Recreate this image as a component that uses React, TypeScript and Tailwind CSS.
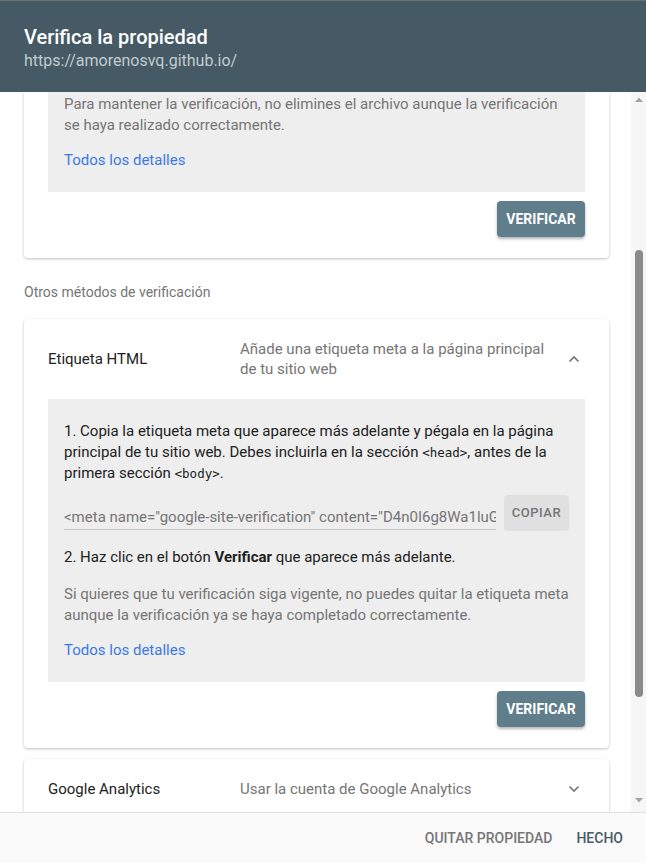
import React from 'react';

const font = { fontFamily: 'Roboto, "Liberation Sans", sans-serif' };
const mono = { fontFamily: '"DejaVu Sans Mono", "Liberation Mono", monospace' };

function Chevron({ up }: { up?: boolean }) {
  return (
    <svg width="12" height="8" viewBox="0 0 12 8" className="shrink-0">
      <path
        d={up ? 'M1.5 6.5 L6 2 L10.5 6.5' : 'M1.5 1.5 L6 6 L10.5 1.5'}
        fill="none"
        stroke="#757575"
        strokeWidth="1.6"
      />
    </svg>
  );
}

function VerifyButton() {
  return (
    <button
      type="button"
      className="h-9 w-[88px] rounded bg-[#607d8b] text-[14px] font-bold text-white shadow-[0_2px_3px_rgba(0,0,0,0.3)]"
    >
      VERIFICAR
    </button>
  );
}

function MethodHeader({ title, desc, open }: { title: string; desc: React.ReactNode; open?: boolean }) {
  return (
    <div className="flex items-center py-5 pl-6 pr-[29px]">
      <div className="w-[192px] text-[15px] leading-5 text-[#212121]">{title}</div>
      <div className="flex-1 text-[15px] leading-5 text-[#757575]">{desc}</div>
      <Chevron up={open} />
    </div>
  );
}

export default function App() {
  return (
    <div className="flex h-[863px] w-[646px] flex-col overflow-hidden bg-white" style={font}>
      {/* header */}
      <div className="h-[92px] shrink-0 border-t border-[#6e6e6e] bg-[#455a64] px-6 pt-[23px]">
        <div className="text-[20px] font-medium leading-[26px] text-white">Verifica la propiedad</div>
        <div className="text-[16px] leading-[22px] text-[#c2cbd0]">https://amorenosvq.github.io/</div>
      </div>

      {/* body */}
      <div className="flex min-h-0 flex-1">
        <div className="min-w-0 flex-1 overflow-hidden pl-6 pr-[22px]">
          {/* card 1, scrolled */}
          <div className="rounded-b-sm bg-white shadow-[0_1px_3px_rgba(0,0,0,0.25)]">
            <div className="mx-6 bg-[#eeeeee] px-4 pb-[21px] pt-[2px]">
              <p className="text-[15px] leading-[21px] text-[#757575]">
                Para mantener la verificación, no elimines el archivo aunque la verificación se haya realizado
                correctamente.
              </p>
              <a className="mt-[14px] block text-[15px] leading-[21px] text-[#3b78e7]">Todos los detalles</a>
            </div>
            <div className="flex justify-end pb-[21px] pr-6 pt-[9px]">
              <VerifyButton />
            </div>
          </div>

          <div className="mt-6 text-[14px] leading-5 text-[#757575]">Otros métodos de verificación</div>

          {/* card 2 */}
          <div className="mt-[17px] rounded-sm bg-white shadow-[0_1px_3px_rgba(0,0,0,0.25)]">
            <MethodHeader
              title="Etiqueta HTML"
              desc={
                <>
                  Añade una etiqueta meta a la página principal
                  <br />
                  de tu sitio web
                </>
              }
              open
            />
            <div className="mx-6 bg-[#eeeeee] px-4 pb-[21px] pt-[22px]">
              <p className="text-[15px] leading-[21px] text-[#212121]">
                1. Copia la etiqueta meta que aparece más adelante y pégala en la página principal de tu sitio web.
                Debes incluirla en la sección{' '}
                <code className="text-[12.5px]" style={mono}>
                  &lt;head&gt;
                </code>
                , antes de la primera sección{' '}
                <code className="text-[12.5px]" style={mono}>
                  &lt;body&gt;
                </code>
                .
              </p>
              <div className="mt-[11px] flex items-start gap-2">
                <div className="mt-[12px] min-w-0 flex-1 overflow-hidden whitespace-nowrap border-b border-[#c6c6c6] pb-[1px] text-[15px] leading-[21px] text-[#757575]">
                  &lt;meta name="google-site-verification" content="D4n0I6g8Wa1luGqX7Yk2s" /&gt;
                </div>
                <button
                  type="button"
                  className="h-9 w-[65px] shrink-0 rounded-sm bg-[#e0e0e0] text-[13px] font-medium tracking-[0.5px] text-[#757575]"
                >
                  COPIAR
                </button>
              </div>
              <p className="mt-4 text-[15px] leading-[21px] text-[#212121]">
                2. Haz clic en el botón <b className="font-bold">Verificar</b> que aparece más adelante.
              </p>
              <p className="mt-4 text-[15px] leading-[21px] text-[#757575]">
                Si quieres que tu verificación siga vigente, no puedes quitar la etiqueta meta aunque la verificación
                ya se haya completado correctamente.
              </p>
              <a className="mt-[14px] block text-[15px] leading-[21px] text-[#3b78e7]">Todos los detalles</a>
            </div>
            <div className="flex justify-end pb-[21px] pr-6 pt-[9px]">
              <VerifyButton />
            </div>
          </div>

          {/* card 3 */}
          <div className="mt-[11px] rounded-sm bg-white shadow-[0_1px_3px_rgba(0,0,0,0.25)]">
            <MethodHeader title="Google Analytics" desc="Usar la cuenta de Google Analytics" />
          </div>
        </div>

        {/* scrollbar */}
        <div className="flex w-[15px] shrink-0 flex-col items-center bg-[#f6f6f6]">
          <svg width="8" height="6" viewBox="0 0 8 6" className="mt-[5px]">
            <path d="M0 5 L4 0.5 L8 5 Z" fill="#a3a3a3" />
          </svg>
          <div className="mt-[147px] h-[447px] w-2 rounded bg-[#8a8a8a]" />
          <div className="flex-1" />
          <svg width="8" height="6" viewBox="0 0 8 6" className="mb-[9px]">
            <path d="M0 1 L4 5.5 L8 1 Z" fill="#a3a3a3" />
          </svg>
        </div>
      </div>

      {/* footer */}
      <div className="flex h-[51px] shrink-0 items-center justify-end gap-2 border-t border-[#e0e0e0] bg-[#fafafa] pr-[15px]">
        <button type="button" className="px-2 py-1 text-[14px] font-medium text-[#757575]">
          QUITAR PROPIEDAD
        </button>
        <button type="button" className="px-2 py-1 text-[14px] font-medium text-[#455a64]">
          HECHO
        </button>
      </div>
    </div>
  );
}
